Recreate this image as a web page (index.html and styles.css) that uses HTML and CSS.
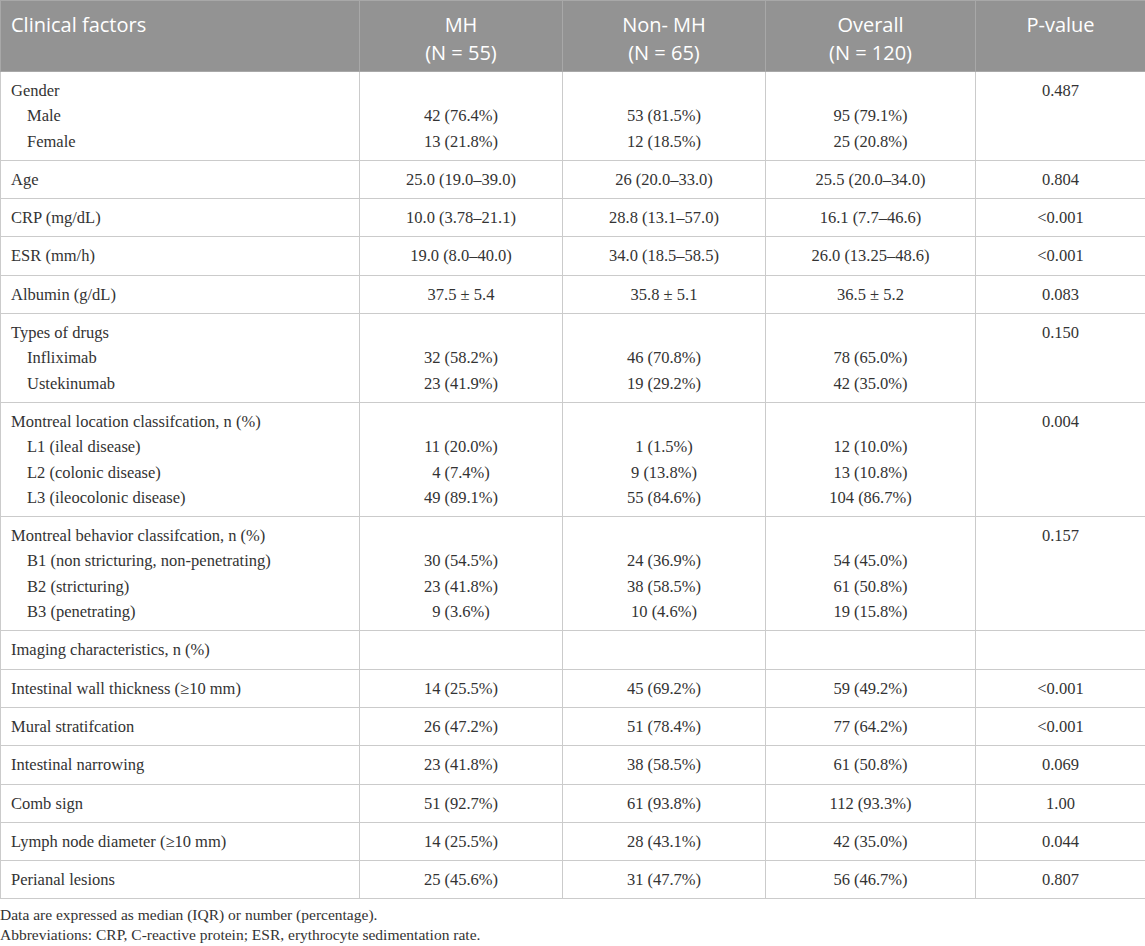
FILE: index.html
```html
<!DOCTYPE html>
<html lang="en">
<head>
    <meta charset="UTF-8">
    <title>Clinical factors</title>
    <link rel="stylesheet" href="styles.css">
</head>
<body>
    <table class="data-table">
        <colgroup>
            <col class="col-factor">
            <col class="col-num">
            <col class="col-num">
            <col class="col-all">
            <col class="col-p">
        </colgroup>
        <thead>
            <tr>
                <th class="left">Clinical factors</th>
                <th>MH<br>(N = 55)</th>
                <th>Non- MH<br>(N = 65)</th>
                <th>Overall<br>(N = 120)</th>
                <th>P-value</th>
            </tr>
        </thead>
        <tbody>
            <tr>
                <td class="left">Gender<div class="sub">Male</div><div class="sub">Female</div></td>
                <td><br>42 (76.4%)<br>13 (21.8%)</td>
                <td><br>53 (81.5%)<br>12 (18.5%)</td>
                <td><br>95 (79.1%)<br>25 (20.8%)</td>
                <td>0.487</td>
            </tr>
            <tr>
                <td class="left">Age</td>
                <td>25.0 (19.0–39.0)</td>
                <td>26 (20.0–33.0)</td>
                <td>25.5 (20.0–34.0)</td>
                <td>0.804</td>
            </tr>
            <tr>
                <td class="left">CRP (mg/dL)</td>
                <td>10.0 (3.78–21.1)</td>
                <td>28.8 (13.1–57.0)</td>
                <td>16.1 (7.7–46.6)</td>
                <td>&lt;0.001</td>
            </tr>
            <tr>
                <td class="left">ESR (mm/h)</td>
                <td>19.0 (8.0–40.0)</td>
                <td>34.0 (18.5–58.5)</td>
                <td>26.0 (13.25–48.6)</td>
                <td>&lt;0.001</td>
            </tr>
            <tr>
                <td class="left">Albumin (g/dL)</td>
                <td>37.5 ± 5.4</td>
                <td>35.8 ± 5.1</td>
                <td>36.5 ± 5.2</td>
                <td>0.083</td>
            </tr>
            <tr>
                <td class="left">Types of drugs<div class="sub">Infliximab</div><div class="sub">Ustekinumab</div></td>
                <td><br>32 (58.2%)<br>23 (41.9%)</td>
                <td><br>46 (70.8%)<br>19 (29.2%)</td>
                <td><br>78 (65.0%)<br>42 (35.0%)</td>
                <td>0.150</td>
            </tr>
            <tr>
                <td class="left">Montreal location classifcation, n (%)<div class="sub">L1 (ileal disease)</div><div class="sub">L2 (colonic disease)</div><div class="sub">L3 (ileocolonic disease)</div></td>
                <td><br>11 (20.0%)<br>4 (7.4%)<br>49 (89.1%)</td>
                <td><br>1 (1.5%)<br>9 (13.8%)<br>55 (84.6%)</td>
                <td><br>12 (10.0%)<br>13 (10.8%)<br>104 (86.7%)</td>
                <td>0.004</td>
            </tr>
            <tr>
                <td class="left">Montreal behavior classifcation, n (%)<div class="sub">B1 (non stricturing, non-penetrating)</div><div class="sub">B2 (stricturing)</div><div class="sub">B3 (penetrating)</div></td>
                <td><br>30 (54.5%)<br>23 (41.8%)<br>9 (3.6%)</td>
                <td><br>24 (36.9%)<br>38 (58.5%)<br>10 (4.6%)</td>
                <td><br>54 (45.0%)<br>61 (50.8%)<br>19 (15.8%)</td>
                <td>0.157</td>
            </tr>
            <tr>
                <td class="left">Imaging characteristics, n (%)</td>
                <td></td>
                <td></td>
                <td></td>
                <td></td>
            </tr>
            <tr>
                <td class="left">Intestinal wall thickness (≥10 mm)</td>
                <td>14 (25.5%)</td>
                <td>45 (69.2%)</td>
                <td>59 (49.2%)</td>
                <td>&lt;0.001</td>
            </tr>
            <tr>
                <td class="left">Mural stratifcation</td>
                <td>26 (47.2%)</td>
                <td>51 (78.4%)</td>
                <td>77 (64.2%)</td>
                <td>&lt;0.001</td>
            </tr>
            <tr>
                <td class="left">Intestinal narrowing</td>
                <td>23 (41.8%)</td>
                <td>38 (58.5%)</td>
                <td>61 (50.8%)</td>
                <td>0.069</td>
            </tr>
            <tr>
                <td class="left">Comb sign</td>
                <td>51 (92.7%)</td>
                <td>61 (93.8%)</td>
                <td>112 (93.3%)</td>
                <td>1.00</td>
            </tr>
            <tr>
                <td class="left">Lymph node diameter (≥10 mm)</td>
                <td>14 (25.5%)</td>
                <td>28 (43.1%)</td>
                <td>42 (35.0%)</td>
                <td>0.044</td>
            </tr>
            <tr>
                <td class="left">Perianal lesions</td>
                <td>25 (45.6%)</td>
                <td>31 (47.7%)</td>
                <td>56 (46.7%)</td>
                <td>0.807</td>
            </tr>
        </tbody>
    </table>
    <div class="notes">
        <p>Data are expressed as median (IQR) or number (percentage).</p>
        <p>Abbreviations: CRP, C-reactive protein; ESR, erythrocyte sedimentation rate.</p>
    </div>
</body>
</html>
```

FILE: styles.css
```css
body {
    margin: 0;
    padding: 0;
    background-color: #ffffff;
    font-family: 'Liberation Serif', 'Times New Roman', serif;
    color: #333333;
}

.data-table {
    width: 1145px;
    border-collapse: collapse;
    table-layout: fixed;
}

.col-factor {
    width: 359px;
}

.col-num {
    width: 203px;
}

.col-all {
    width: 210px;
}

.col-p {
    width: 170px;
}

.data-table th {
    background-color: #939393;
    color: #ffffff;
    font-family: 'Open Sans', 'Noto Sans', sans-serif;
    font-weight: 400;
    font-size: 20px;
    line-height: 27.5px;
    text-align: center;
    vertical-align: top;
    padding: 10px 10px 5px;
    border: 1px solid #a8a8a8;
}

.data-table td {
    font-size: 16.5px;
    line-height: 25.3px;
    text-align: center;
    vertical-align: top;
    padding: 6px 10px;
    border: 1px solid #cbcbcb;
}

.data-table .left {
    text-align: left;
}

.sub {
    padding-left: 16px;
}

.notes {
    padding-top: 6px;
    font-size: 15.5px;
    line-height: 20px;
}

.notes p {
    margin: 0;
}
```
